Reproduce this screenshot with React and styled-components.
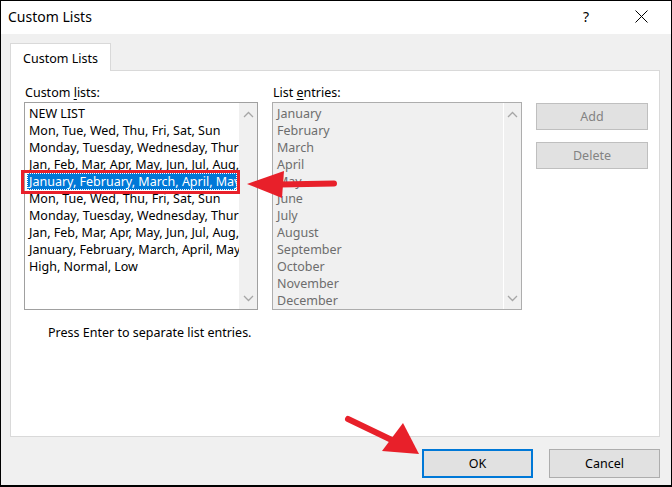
import styled, { createGlobalStyle } from "styled-components";

const GlobalStyle = createGlobalStyle`
  html, body {
    margin: 0;
    padding: 0;
    background: #ffffff;
  }
  * { box-sizing: border-box; }
`;

const customLists = [
  "NEW LIST",
  "Mon, Tue, Wed, Thu, Fri, Sat, Sun",
  "Monday, Tuesday, Wednesday, Thursday, Friday, Saturday, Sunday",
  "Jan, Feb, Mar, Apr, May, Jun, Jul, Aug, Sep, Oct, Nov, Dec",
  "January, February, March, April, May, June, July, August",
  "Mon, Tue, Wed, Thu, Fri, Sat, Sun",
  "Monday, Tuesday, Wednesday, Thursday, Friday, Saturday, Sunday",
  "Jan, Feb, Mar, Apr, May, Jun, Jul, Aug, Sep, Oct, Nov, Dec",
  "January, February, March, April, May, June, July, August",
  "High, Normal, Low",
];

const entries = [
  "January", "February", "March", "April", "May", "June",
  "July", "August", "September", "October", "November", "December",
];

function Chevron({ up }) {
  return (
    <svg width="11" height="7" viewBox="0 0 11 7">
      <polyline
        points={up ? "1,6 5.5,1.5 10,6" : "1,1 5.5,5.5 10,1"}
        fill="none"
        stroke="#a6a6a6"
        strokeWidth="1.3"
      />
    </svg>
  );
}

function App() {
  return (
    <>
      <GlobalStyle />
      <Window>
        <TitleBar>
          <Title>Custom Lists</Title>
          <TitleButtons>
            <TitleButton>?</TitleButton>
            <TitleButton>
              <svg width="13" height="13" viewBox="0 0 13 13">
                <path d="M0.5 0.5 L12.5 12.5 M12.5 0.5 L0.5 12.5" stroke="#000" strokeWidth="1" />
              </svg>
            </TitleButton>
          </TitleButtons>
        </TitleBar>

        <Body>
          <TabStrip>
            <Tab>Custom Lists</Tab>
          </TabStrip>
          <Panel>
            <Columns>
              <Column>
                <Label>Custom <u>l</u>ists:</Label>
                <ListBox $width={234}>
                  <Rows>
                    {customLists.map((t, i) => (
                      <Row key={i} $selected={i === 4}>{t}</Row>
                    ))}
                  </Rows>
                  <Scroll>
                    <Chevron up />
                    <Chevron />
                  </Scroll>
                </ListBox>
              </Column>
              <Column>
                <Label>List <u>e</u>ntries:</Label>
                <ListBox $width={250} $disabled>
                  <Rows>
                    {entries.map((t) => (
                      <Row key={t} $disabled>{t}</Row>
                    ))}
                  </Rows>
                  <Scroll $disabled>
                    <Chevron up />
                    <Chevron />
                  </Scroll>
                </ListBox>
              </Column>
              <SideButtons>
                <SideButton>Add</SideButton>
                <SideButton>Delete</SideButton>
              </SideButtons>
            </Columns>
            <Hint>Press Enter to separate list entries.</Hint>
          </Panel>
          <Footer>
            <DialogButton $primary>OK</DialogButton>
            <DialogButton>Cancel</DialogButton>
          </Footer>
        </Body>

        <Overlay width="672" height="487" viewBox="0 0 672 487">
          <rect x="22.5" y="171.5" width="216" height="21" fill="none" stroke="#e8202a" strokeWidth="3" />
          <path d="M334 183.5 L280 184.5" stroke="#e8202a" strokeWidth="6" strokeLinecap="round" />
          <polygon points="247,184 284,171 282,198" fill="#e8202a" />
          <path d="M348 419 L398 443" stroke="#e8202a" strokeWidth="6" strokeLinecap="round" />
          <polygon points="419,454 382,451 403,423" fill="#e8202a" />
        </Overlay>
      </Window>
    </>
  );
}

export default App;

// styles

const Window = styled.div`
  position: relative;
  width: 672px;
  height: 487px;
  border: 1px solid #000;
  border-bottom-width: 2px;
  background: #f0f0f0;
  display: flex;
  flex-direction: column;
  font-family: "Noto Sans", "Open Sans", sans-serif;
  font-size: 12.5px;
  color: #000;
`;

const TitleBar = styled.div`
  height: 33px;
  background: #fff;
  display: flex;
  align-items: center;
  justify-content: space-between;
  padding-left: 7px;
  padding-right: 7px;
`;

const Title = styled.div`
  font-size: 14px;
  padding-bottom: 2px;
`;

const TitleButtons = styled.div`
  display: flex;
  align-items: center;
  gap: 9px;
  height: 100%;
`;

const TitleButton = styled.div`
  width: 46px;
  height: 100%;
  display: flex;
  align-items: center;
  justify-content: center;
  font-size: 14px;
  padding-bottom: 2px;
`;

const Body = styled.div`
  flex: 1;
  display: flex;
  flex-direction: column;
  padding: 9px 11px 0 9px;
`;

const TabStrip = styled.div`
  display: flex;
  height: 27px;
`;

const Tab = styled.div`
  width: 101px;
  height: 28px;
  background: #fff;
  border: 1px solid #d9d9d9;
  border-bottom: none;
  display: flex;
  align-items: center;
  justify-content: center;
  padding-top: 1px;
  position: relative;
  z-index: 1;
`;

const Panel = styled.div`
  height: 367px;
  background: #fff;
  border: 1px solid #d9d9d9;
  padding: 13px 0 0 13px;
  display: flex;
  flex-direction: column;
`;

const Columns = styled.div`
  display: flex;
  gap: 14px;
`;

const Column = styled.div`
  display: flex;
  flex-direction: column;
`;

const Label = styled.div`
  height: 18px;
  line-height: 18px;
  padding-left: 1px;
  u { text-underline-offset: 2px; }
`;

const ListBox = styled.div`
  width: ${(p) => p.$width}px;
  height: 208px;
  border: 1px solid ${(p) => (p.$disabled ? "#adadad" : "#a0a0a0")};
  background: ${(p) => (p.$disabled ? "#f0f0f0" : "#fff")};
  display: flex;
  overflow: hidden;
`;

const Rows = styled.div`
  flex: 1;
  min-width: 0;
  padding: 2px 0 0 2px;
  overflow: hidden;
`;

const Row = styled.div`
  height: 17px;
  line-height: 17px;
  white-space: nowrap;
  overflow: hidden;
  padding-left: 2px;
  margin-right: ${(p) => (p.$selected ? "2px" : "0")};
  color: ${(p) => (p.$selected ? "#fff" : p.$disabled ? "#6d6d6d" : "#000")};
  background: ${(p) => (p.$selected ? "#0078d7" : "transparent")};
  outline: ${(p) => (p.$selected ? "1px dotted #fff" : "none")};
  outline-offset: -1px;
`;

const Scroll = styled.div`
  width: 18px;
  background: #f0f0f0;
  border-left: 1px solid ${(p) => (p.$disabled ? "#fff" : "#f0f0f0")};
  display: flex;
  flex-direction: column;
  justify-content: space-between;
  align-items: center;
  padding: 8px 0 7px;
`;

const SideButtons = styled.div`
  display: flex;
  flex-direction: column;
  gap: 12px;
  padding-top: 19px;
`;

const SideButton = styled.div`
  width: 112px;
  height: 27px;
  border: 1px solid #bfbfbf;
  background: #e1e1e1;
  color: #838383;
  display: flex;
  align-items: center;
  justify-content: center;
`;

const Hint = styled.div`
  margin-top: 14px;
  padding-left: 24px;
`;

const Footer = styled.div`
  display: flex;
  justify-content: flex-end;
  gap: 16px;
  padding-top: 12px;
`;

const DialogButton = styled.div`
  width: 111px;
  height: 29px;
  background: #e1e1e1;
  border: ${(p) => (p.$primary ? "2px solid #0078d7" : "1px solid #adadad")};
  display: flex;
  align-items: center;
  justify-content: center;
`;

const Overlay = styled.svg`
  position: absolute;
  left: -1px;
  top: -1px;
  pointer-events: none;
`;
